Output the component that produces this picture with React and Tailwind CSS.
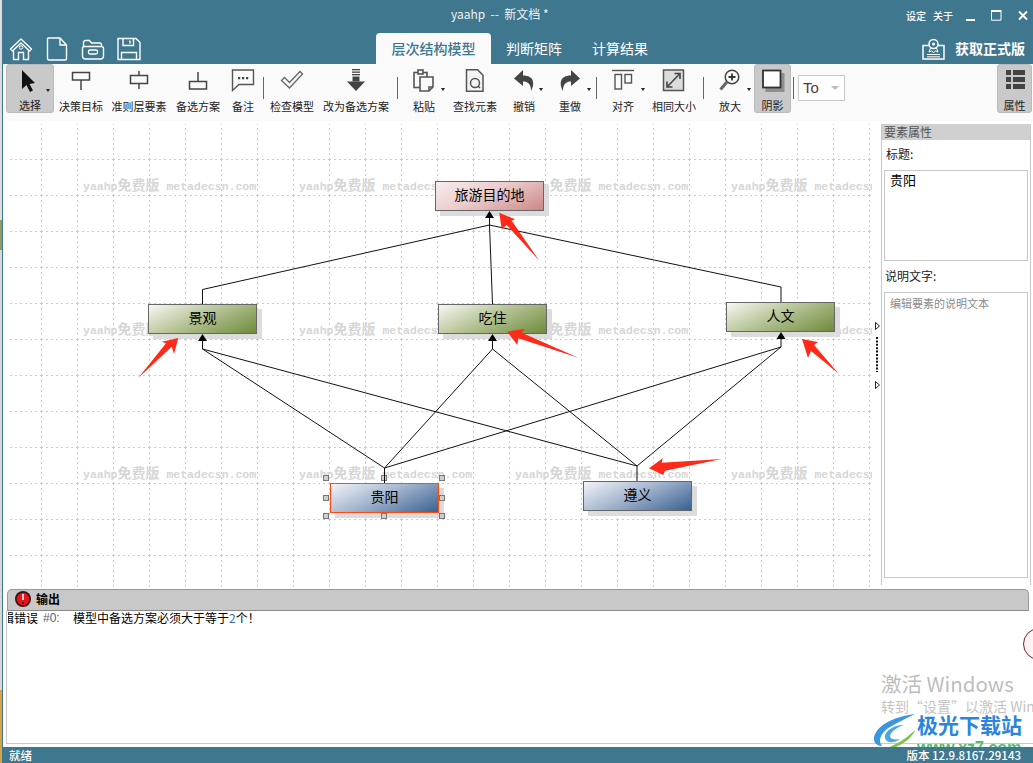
const G = ({ children, w = 24, h = 24, className = "" }) => (
  <svg width={w} height={h} viewBox={`0 0 ${w} ${h}`} className={className} fill="none">{children}</svg>
);

const ic = {
  select: <path d="M4 1 L4 20 L8.5 16 L12 23 L15 21.5 L11.5 15 L17 14 Z" fill="#111" />,
  goal: <g stroke="#444" strokeWidth="1.5"><rect x="3.5" y="3.5" width="17" height="7.5" /><path d="M12 11v10" /></g>,
  crit: <g stroke="#444" strokeWidth="1.5"><rect x="3.5" y="6.5" width="17" height="8" /><path d="M12 2v4.5M12 14.5V20" /></g>,
  alt: <g stroke="#444" strokeWidth="1.5"><rect x="3.5" y="12.5" width="17" height="7.5" /><path d="M12 3v9.5" /></g>,
  note: <g><path d="M1.5 1h21v14.5H8l-6.5 6z" stroke="#555" strokeWidth="1.4" /><path d="M7 8h2.2v2.2H7zM11 8h2.2v2.2H11zM15 8h2.2v2.2H15z" fill="#444" /></g>,
  check: <path d="M1.5 11.5 L4.5 8.5 L9.5 13.5 L20 2.5 L22.5 5 L9.5 19 Z" stroke="#666" strokeWidth="1.3" />,
  down: <g fill="#444"><rect x="8" y="0" width="8" height="1.3" /><rect x="8" y="2.5" width="8" height="1.3" /><rect x="8" y="5" width="8" height="1.3" /><rect x="8.5" y="7.5" width="7" height="5" /><path d="M3 12.5h18L12 22z" /></g>,
  paste: <g stroke="#555" strokeWidth="1.6"><rect x="2" y="3.5" width="13" height="15" fill="#fafafa" /><rect x="6" y="1" width="5" height="4" fill="#fafafa" /><path d="M8 8h13v10l-4 4H8z" fill="#fafafa" /><path d="M17 22v-4h4" /></g>,
  find: <g stroke="#555" strokeWidth="1.5"><path d="M3.5 0.8h11l5.5 5.5v16H3.5z" fill="#f4f4f4" /><circle cx="12" cy="14" r="4.5" /><path d="M15 17l2 2" /></g>,
  undo: <path d="M11 1 L2 9.5 L11 17 V12.5 C16 12.5 19 15 19 22 C23 15 22.5 6.5 11 6.5 Z" fill="#444" />,
  redo: <path d="M13 1 L22 9.5 L13 17 V12.5 C8 12.5 5 15 5 22 C1 15 1.5 6.5 13 6.5 Z" fill="#444" />,
  align: <g stroke="#555" strokeWidth="1.4"><path d="M1 1.5h22" /><rect x="4" y="5.5" width="6.5" height="14.5" /><rect x="14" y="5.5" width="6.5" height="8.5" /></g>,
  size: <g><rect x="1.5" y="1" width="20" height="20.5" fill="#dcdcdc" stroke="#555" strokeWidth="1.5" /><path d="M5.5 17.5L17.5 5" stroke="#444" strokeWidth="1.6" /><path d="M12.5 4.5h5.5v5.5M10.5 18H5v-5.5" stroke="#444" strokeWidth="1.6" /></g>,
  zoom: <g><circle cx="14" cy="8" r="6.8" stroke="#444" strokeWidth="1.5" /><path d="M14 4.5v7M10.5 8h7" stroke="#333" strokeWidth="1.8" /><path d="M9 13L2.5 20.5" stroke="#666" strokeWidth="3" /></g>,
  shadow: <g><rect x="4.5" y="4" width="19" height="19" fill="#8f8f8f" /><rect x="2" y="1.5" width="17.5" height="17" fill="#fff" stroke="#333" strokeWidth="1.8" /></g>,
  props: <g fill="#444"><rect x="3" y="1" width="5" height="5" /><rect x="10" y="1" width="12" height="5" /><rect x="3" y="8" width="5" height="5" /><rect x="10" y="8" width="12" height="5" /><rect x="3" y="15" width="5" height="5" /><rect x="10" y="15" width="12" height="5" /></g>,
};

const Caret = () => <span className="absolute right-[3px] top-[24px] w-0 h-0 border-x-[2.5px] border-x-transparent border-t-[3px] border-t-[#222]" />;

const Tool = ({ w, icon, label, caret, active }) => (
  <div className={`relative flex flex-col items-center h-[49px] shrink-0 ${w} ${active ? "bg-[#c9c9c9] rounded-[3px] border border-[#bbbbbb]" : ""}`}>
    <G className={active ? "mt-[4px]" : "mt-[5px]"}>{ic[icon]}</G>
    <span className="mt-auto text-[11px] leading-[14px] whitespace-nowrap text-[#222]">{label}</span>
    {caret && <Caret />}
  </div>
);

const Sep = ({ w }) => (
  <div className={`flex justify-center shrink-0 h-[48px] ${w}`}>
    <div className="w-px h-[22px] mt-[13px] bg-[#666]" />
  </div>
);

const Node = ({ pos, grad, border = "border-[#666666]", label }) => (
  <div className={`absolute ${pos} w-[109px] h-[30px] border ${border} ${grad} shadow-[5px_5px_0_#dcdcdc] flex items-center justify-center pb-[4px] text-[14px] text-black`}>
    {label}
  </div>
);

const Handle = ({ pos }) => <div className={`absolute ${pos} w-[6px] h-[6px] bg-[#cfcfcf] border border-[#777]`} />;

const green = "bg-[linear-gradient(155deg,#f7f8f3_0%,#b7c598_45%,#6f8a3c_100%)]";
const blue = "bg-[linear-gradient(155deg,#f3f4f8_0%,#a6b7cf_45%,#3a6191_100%)]";
const red = "bg-[linear-gradient(155deg,#f7eded_0%,#eccccc_45%,#cc8888_100%)]";

const Mark = () => (
  <div className="font-['Liberation_Mono','Noto_Sans_CJK_SC',monospace] font-bold text-[11.5px] leading-[14px] text-[#d6d6d6] whitespace-nowrap">
    yaahp<span className="text-[14px]">免费版</span> metadecsn.com
  </div>
);

const lines = [
  "M489.5 225L202.5 289.5V304",
  "M489.5 225L781 287V302",
  "M489.5 217V225L492.5 304",
  "M202.5 341V349L384.5 468",
  "M202.5 349L637 466",
  "M492.5 341V349L384.5 468",
  "M492.5 349L637 466",
  "M781 339V347L384.5 468",
  "M781 347L637 466",
  "M384.5 468V483",
  "M637 466V481",
];
const tips = [
  "M489.5 211l-4.5 7h9z",
  "M202.5 334l-4.5 7h9z",
  "M492.5 334l-4.5 7h9z",
  "M781 332l-4.5 7h9z",
];
const reds = [
  "499.3,212.7 515,219.3 511.7,220.7 539.3,260.7 506.7,225 501.7,229.3",
  "178.3,338 161.7,341.7 166,343.3 138,378.3 171.7,346.7 174,354",
  "507.3,331.7 525,328.7 521.7,332.7 578.3,357.7 518.3,338.3 517.3,345",
  "802,339 818,342 814,345 839,374 811,351 808,358",
  "649,468.3 662.7,458.3 661.7,462.7 721.7,459 665,470.7 663.3,475",
];

export default function App() {
  return (
    <div className="relative flex w-[1033px] h-[763px] overflow-hidden bg-white font-['Noto_Sans_CJK_SC','Liberation_Sans',sans-serif]">
      <div className="flex flex-col w-[2px] shrink-0">
        <div className="h-[220px] bg-[#dddddd]" />
        <div className="h-[30px] bg-[#8f9c63]" />
        <div className="flex-1 bg-[#d8d8d8]" />
        <div className="h-[73px] bg-[#d6a347]" />
      </div>

      <div className="flex flex-col w-[1031px] border-l border-[#3f778f]">
        {/* title bar */}
        <div className="flex h-[33px] bg-[#3f778f] text-white shrink-0">
          <div className="ml-[448px] mt-[6px] text-[12px] leading-[16px] text-[#eef3f5] whitespace-pre">yaahp  --  新文档 *</div>
          <div className="ml-auto flex items-start pt-[10px] pr-[5px]">
            <span className="text-[10px] leading-[12px] font-medium">设定</span>
            <span className="text-[10px] leading-[12px] font-medium ml-[7px]">关于</span>
            <G w={10} h={11} className="ml-[13px]"><rect x="0" y="9" width="9" height="2" fill="#fff" /></G>
            <G w={11} h={11} className="ml-[15px]"><path d="M0.5 1.2h9.5v9H0.5z" stroke="#fff" /><path d="M0 1h10.5" stroke="#fff" strokeWidth="2" /></G>
            <G w={10} h={11} className="ml-[16px]"><path d="M1 1.5l8 8M9 1.5l-8 8" stroke="#fff" strokeWidth="1.8" /></G>
          </div>
        </div>

        {/* tabs row */}
        <div className="flex h-[31px] bg-[#3f778f] text-white shrink-0">
          <div className="flex">
            <div className="w-[36px] flex justify-center pt-[4px]">
              <G>
                <path d="M1.5 12L12 2l10.5 10-2 2L12 6 3.5 14z" stroke="#fff" strokeWidth="1.4" strokeLinejoin="round" />
                <path d="M4.5 13.5V22.500h5v-7h5v7h5v-9" stroke="#fff" strokeWidth="1.4" />
                <circle cx="12" cy="10.500" r="1.700" stroke="#fff" />
              </G>
            </div>
            <div className="w-[36px] flex justify-center pt-[4px]">
              <G><path d="M3 1h12l6.500 7v13.500a1.500 1.500 0 0 1-1.500 1.500H4a1.500 1.500 0 0 1-1.500-1.500V2.500A1.500 1.500 0 0 1 3 1zM15 1v7h6.500" stroke="#fff" strokeWidth="1.4" /></G>
            </div>
            <div className="w-[36px] flex justify-center pt-[4px]">
              <G><path d="M2.500 10V5.500a2 2 0 0 1 2-2h4l2 2.500h8a2 2 0 0 1 2 2V10M1.500 11a2 2 0 0 1 2-1.500h17a2 2 0 0 1 2 1.500v8a3 3 0 0 1-3 3H4.500a3 3 0 0 1-3-3z" stroke="#fff" strokeWidth="1.400" /><rect x="7.500" y="13" width="9" height="4" rx="1.500" stroke="#fff" strokeWidth="1.300" /></G>
            </div>
            <div className="w-[36px] flex justify-center pt-[4px]">
              <G><path d="M1 1.500h18l4 4V22.500H1zM6 1.500v7h10.500v-7M4.500 22.500v-7H19.500v7" stroke="#fff" strokeWidth="1.400" /><path d="M13 3.500v3" stroke="#fff" strokeWidth="1.400" /></G>
            </div>
          </div>
          <div className="ml-[229px] w-[115px] h-[31px] bg-[#fafafa] rounded-t-[4px] flex items-center justify-center text-[14px] font-medium text-[#3f778f]">层次结构模型</div>
          <div className="w-[86px] flex items-center justify-center text-[14px]">判断矩阵</div>
          <div className="w-[86px] flex items-center justify-center text-[14px]">计算结果</div>
          <div className="ml-auto flex items-center pr-[8px]">
            <G w={23} h={22} className="mr-[10px]">
              <path d="M7 7.500H1v13.500h21V7.500h-6" stroke="#fff" strokeWidth="1.500" />
              <circle cx="11.500" cy="6" r="4.500" stroke="#fff" strokeWidth="1.500" />
              <circle cx="11.500" cy="6" r="1.500" fill="#fff" />
              <path d="M8.500 10l-1.500 4 2.500-1 2 1.500 2-1.500 2.500 1-1.500-4" stroke="#fff" />
              <path d="M5 16.500h13M5 18.800h13" stroke="#fff" />
            </G>
            <span className="text-[14px] font-bold">获取正式版</span>
          </div>
        </div>

        {/* toolbar */}
        <div className="flex h-[57px] pl-[3px] bg-[#fafafa] shrink-0">
          <Tool w="w-[48px]" icon="select" label="选择" caret active />
          <Tool w="w-[54px]" icon="goal" label="决策目标" />
          <Tool w="w-[62px]" icon="crit" label="准则层要素" />
          <Tool w="w-[56px]" icon="alt" label="备选方案" />
          <Tool w="w-[34px]" icon="note" label="备注" />
          <Sep w="w-[6px]" />
          <Tool w="w-[52px]" icon="check" label="检查模型" />
          <Tool w="w-[76px]" icon="down" label="改为备选方案" />
          <Sep w="w-[6px]" />
          <Tool w="w-[48px]" icon="paste" label="粘贴" caret />
          <Tool w="w-[54px]" icon="find" label="查找元素" />
          <Tool w="w-[44px]" icon="undo" label="撤销" caret />
          <Tool w="w-[48px]" icon="redo" label="重做" caret />
          <Sep w="w-[4px]" />
          <Tool w="w-[50px]" icon="align" label="对齐" caret />
          <Tool w="w-[52px]" icon="size" label="相同大小" />
          <Sep w="w-[6px]" />
          <Tool w="w-[48px]" icon="zoom" label="放大" caret />
          <Tool w="w-[37px]" icon="shadow" label="阴影" active />
          <Sep w="w-[5px]" />
          <div className="ml-[2px] mt-[11px] w-[47px] h-[26px] border border-[#c8c8c8] bg-white flex items-center pl-[4px] text-[15px] text-[#5a3a30] font-['Liberation_Sans',sans-serif]">
            To
            <span className="ml-auto mr-[5px] w-0 h-0 border-x-[4px] border-x-transparent border-t-[4px] border-t-[#bbbbbb]" />
          </div>
          <div className="ml-auto mr-px">
            <Tool w="w-[35px]" icon="props" label="属性" active />
          </div>
        </div>

        {/* canvas, splitter, properties */}
        <div className="flex h-[467px] shrink-0">
          <div className="relative w-[869px] h-[467px] overflow-hidden bg-white shrink-0">
            <svg width="869" height="467" viewBox="3 121 869 467" className="absolute inset-0">
              <defs>
                <pattern id="grid" x="41" y="159" width="36" height="36" patternUnits="userSpaceOnUse">
                  <path d="M0.5 0V36M0 0.5H36" stroke="#cccccc" strokeDasharray="2 3" fill="none" />
                </pattern>
              </defs>
              <rect x="7" y="124" width="865" height="464" fill="url(#grid)" />
            </svg>
            <div className="absolute left-[80px] top-[58px] grid grid-cols-[repeat(4,216px)] auto-rows-[144px]">
              {Array.from({ length: 12 }).map((_, i) => <Mark key={i} />)}
            </div>
            <Node pos="left-[432px] top-[60px]" grad={red} label="旅游目的地" />
            <Node pos="left-[145px] top-[183px]" grad={green} label="景观" />
            <Node pos="left-[435px] top-[183px]" grad={green} label="吃住" />
            <Node pos="left-[723px] top-[181px]" grad={green} label="人文" />
            <Node pos="left-[327px] top-[362px]" grad={blue} border="border-[#ff4a12]" label="贵阳" />
            <Node pos="left-[580px] top-[360px]" grad={blue} label="遵义" />
            <Handle pos="left-[320px] top-[354px]" />
            <Handle pos="left-[378px] top-[354px]" />
            <Handle pos="left-[436px] top-[354px]" />
            <Handle pos="left-[320px] top-[374px]" />
            <Handle pos="left-[436px] top-[374px]" />
            <Handle pos="left-[320px] top-[392px]" />
            <Handle pos="left-[378px] top-[392px]" />
            <Handle pos="left-[436px] top-[392px]" />
            <svg width="869" height="467" viewBox="3 121 869 467" className="absolute inset-0">
              {lines.map((d) => <path key={d} d={d} stroke="#111" strokeWidth="1" fill="none" />)}
              {tips.map((d) => <path key={d} d={d} fill="#000" />)}
              {reds.map((p) => <polygon key={p} points={p} fill="#ff2a1a" />)}
            </svg>
          </div>

          <div className="w-[9px] shrink-0">
            <svg width="9" height="467" viewBox="0 0 9 467">
              <path d="M3.500 201.500v7l4-3.500z" fill="#fff" stroke="#222" />
              <path d="M3.500 260.500v7l4-3.500z" fill="#fff" stroke="#222" />
              <path d="M5 216v35" stroke="#111" strokeWidth="2" strokeDasharray="2 1.400" />
            </svg>
          </div>

          <div className="w-[150px] mt-[3px] mb-[3px] flex flex-col border-x border-[#c8c8c8] shrink-0">
            <div className="h-[16px] bg-[#d0d0d0] text-[12px] leading-[16px] pl-[2px] text-[#555]">要素属性</div>
            <div className="mt-[6px] pl-[4px] text-[12px] leading-[16px] text-[#222]">标题:</div>
            <div className="mt-[8px] mx-[2px] h-[91px] border border-[#c8c8c8] pl-[5px] text-[13px] leading-[17px] text-black">贵阳</div>
            <div className="mt-[7px] pl-[3px] text-[12px] leading-[16px] text-[#222]">说明文字:</div>
            <div className="mt-[8px] mx-[2px] h-[286px] border border-[#c8c8c8] pl-[5px] pt-[2px] text-[11px] leading-[16px] text-[#8a8a8a]">编辑要素的说明文本</div>
          </div>
        </div>

        {/* output */}
        <div className="flex-1 flex flex-col min-h-0">
          <div className="ml-[4px] mr-[4px] mt-px h-[22px] flex items-center pb-[3px] bg-[#c8c8c8] border border-[#999] border-b-[#8a8a8a] rounded-t-[5px] shrink-0">
            <svg width="18" height="18" viewBox="0 0 18 18" className="ml-[6px]">
              <circle cx="9" cy="9" r="8" fill="#3a1010" />
              <circle cx="9" cy="9" r="6.300" fill="#e8131c" />
              <path d="M9 4v6" stroke="#fff" strokeWidth="1.600" />
              <path d="M9 12v2" stroke="#111" strokeWidth="1.600" />
            </svg>
            <span className="ml-[4px] text-[12px] font-bold text-black">输出</span>
          </div>
          <div className="flex-1 ml-[3px] mb-[3px] border-l border-b border-[#c8c8c8] bg-white min-h-0 overflow-hidden">
            <div className="flex text-[12px] leading-[14px] text-black whitespace-nowrap pl-px">
              <span className="w-[35px] overflow-hidden shrink-0"><span className="inline-block ml-[-6px]">辑错误</span></span>
              <span className="w-[30px] text-[#52607a] font-['Liberation_Sans',sans-serif] shrink-0">#0:</span>
              <span>模型中备选方案必须大于等于<span className="text-[#3a6fb5]">2</span>个！</span>
            </div>
          </div>
          <div className="relative z-10 h-[16px] bg-[#3f778f] text-white text-[11.5px] leading-[16px] flex pl-[6px] pr-[12px] font-medium shrink-0">
            <span>就绪</span>
            <span className="ml-auto">版本 12.9.8167.29143</span>
          </div>
        </div>
      </div>

      {/* overlays: activation watermark, site logo, edge bubble */}
      <div className="absolute left-[1023px] top-[628px] w-[36px] h-[32px] rounded-full bg-[#fff4f4] border border-[#7a2230]" />
      <div className="absolute left-[881px] top-[668px] text-[20.5px] leading-[30px] text-[#bdbdbd] whitespace-nowrap">激活 Windows</div>
      <div className="absolute left-[881px] top-[697px] text-[14px] leading-[18px] text-[#c4c4c4] whitespace-nowrap">转到“设置”以激活 Windows。</div>
      <svg width="42" height="41" viewBox="0 0 42 41" className="absolute left-[874px] top-[713px]">
        <path d="M41 1C24 3 4 10 0 24c-1 6 4 9 8 9C4 28 6 20 16 14 24 9 33 5 41 1z" fill="#3a97dd" />
        <path d="M30 12C20 12 10 18 11 25c1 5 9 6 15 1-6 1-10 0-10-3 1-5 8-9 14-11z" fill="#4aa8d8" />
        <path d="M41 17c-3 9-17 19-36 22 13-6 25-11 36-22z" fill="#7cc44a" />
      </svg>
      <div className="absolute left-[917px] top-[709px] text-[21px] leading-[30px] font-bold text-[#2a86dc] whitespace-nowrap">极光下载站</div>
      <div className="absolute left-[917px] top-[738px] text-[16px] leading-[20px] font-bold text-[#54bd6f] font-['Liberation_Sans',sans-serif] whitespace-nowrap">www.xz7.com</div>
    </div>
  );
}
